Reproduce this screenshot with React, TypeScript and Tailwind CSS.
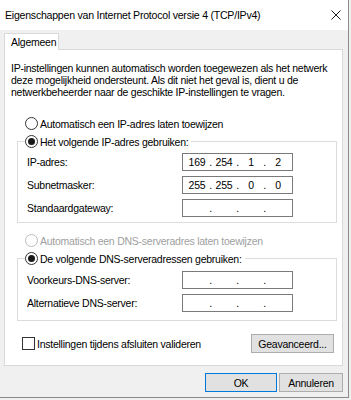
import React from 'react';

const font = { fontFamily: '"Liberation Sans", Arial, sans-serif' };

function Radio({ checked, disabled }: { checked?: boolean; disabled?: boolean }) {
  return (
    <span
      className={`flex h-[13px] w-[13px] shrink-0 items-center justify-center rounded-full border bg-white ${
        disabled ? 'border-[#bcbcbc]' : 'border-[#333333]'
      }`}
    >
      {checked && <span className="h-[7px] w-[7px] rounded-full bg-[#1a1a1a]"></span>}
    </span>
  );
}

function IpField({ value }: { value?: string[] }) {
  const parts = value ?? ['', '', '', ''];
  return (
    <div className="flex h-[18px] w-[111px] items-center border border-[#7a7a7a] bg-white pl-[3px]">
      {parts.map((p, i) => (
        <React.Fragment key={i}>
          <span className="w-[22px] text-center">{p}</span>
          {i < 3 && <span className="w-[5px] text-center">.</span>}
        </React.Fragment>
      ))}
    </div>
  );
}

function FieldRow({ label, value }: { label: string; value?: string[] }) {
  return (
    <div className="flex h-[18px] items-center">
      <span className="w-[164px] pl-[9px]">{label}</span>
      <IpField value={value} />
    </div>
  );
}

function Button({ children, primary, className }: { children: React.ReactNode; primary?: boolean; className?: string }) {
  return (
    <div
      className={`flex h-[19px] items-center justify-center border bg-[#e1e1e1] ${
        primary ? 'border-[#0078d7]' : 'border-[#adadad]'
      } ${className ?? ''}`}
    >
      {children}
    </div>
  );
}

export default function App() {
  return (
    <div
      className="h-[400px] w-[351px] bg-[#f0f0f0] text-[10.5px] leading-[12px] tracking-[-0.25px] text-black"
      style={font}
    >
      <div className="h-[398px] w-[349px] border-r border-b border-[#8a8a8a]">
        {/* title bar */}
        <div className="flex h-[30px] items-center justify-between bg-white pl-[5px] pr-[7px]">
          <span className="text-[10.6px]">Eigenschappen van Internet Protocol versie 4 (TCP/IPv4)</span>
          <svg width="10" height="10" viewBox="0 0 10 10">
            <path d="M0.5 0.5 L9.5 9.5 M9.5 0.5 L0.5 9.5" stroke="#222" strokeWidth="1" />
          </svg>
        </div>

        <div className="px-[4px] pt-[3px]">
          {/* tab */}
          <div className="relative z-10 -mb-px flex h-[17px] w-[55px] items-center border border-b-0 border-[#d9d9d9] bg-white pl-[6px]">
            Algemeen
          </div>

          {/* panel */}
          <div className="h-[317px] w-[339px] border border-[#d9d9d9] bg-white pt-[12px]">
            <p className="pl-[6px]">
              IP-instellingen kunnen automatisch worden toegewezen als het netwerk
              <br />
              deze mogelijkheid ondersteunt. Als dit niet het geval is, dient u de
              <br />
              netwerkbeheerder naar de geschikte IP-instellingen te vragen.
            </p>

            <div className="ml-[20px] mt-[19px] flex h-[13px] items-center gap-[2px]">
              <Radio />
              <span>Automatisch een IP-adres laten toewijzen</span>
            </div>

            <div className="ml-[12px] mr-[5px] mt-[11px] border border-[#dcdcdc] pb-[5px]">
              <div className="-mt-[7px] ml-[7px] flex h-[13px] w-fit items-center gap-[2px] bg-white pr-[3px]">
                <Radio checked />
                <span>Het volgende IP-adres gebruiken:</span>
              </div>
              <div className="mt-[5px] flex flex-col gap-[5px]">
                <FieldRow label="IP-adres:" value={['169', '254', '1', '2']} />
                <FieldRow label="Subnetmasker:" value={['255', '255', '0', '0']} />
                <FieldRow label="Standaardgateway:" />
              </div>
            </div>

            <div className="ml-[20px] mt-[11px] flex h-[13px] items-center gap-[2px] text-[#a0a0a0]">
              <Radio disabled />
              <span>Automatisch een DNS-serveradres laten toewijzen</span>
            </div>

            <div className="ml-[12px] mr-[5px] mt-[11px] border border-[#dcdcdc] pb-[8px]">
              <div className="-mt-[7px] ml-[7px] flex h-[13px] w-fit items-center gap-[2px] bg-white pr-[3px]">
                <Radio checked />
                <span>De volgende DNS-serveradressen gebruiken:</span>
              </div>
              <div className="mt-[6px] flex flex-col gap-[5px]">
                <FieldRow label="Voorkeurs-DNS-server:" />
                <FieldRow label="Alternatieve DNS-server:" />
              </div>
            </div>

            <div className="ml-[17px] mr-[8px] mt-[13px] flex items-center justify-between">
              <div className="flex items-center gap-[2px]">
                <span className="h-[13px] w-[13px] border border-[#333333] bg-white"></span>
                <span>Instellingen tijdens afsluiten valideren</span>
              </div>
              <Button className="w-[83px]">Geavanceerd...</Button>
            </div>
          </div>

          <div className="mt-[7px] flex justify-end gap-[2px] pr-[1px]">
            <Button primary className="w-[72px]">OK</Button>
            <Button className="w-[64px]">Annuleren</Button>
          </div>
        </div>
      </div>
    </div>
  );
}
